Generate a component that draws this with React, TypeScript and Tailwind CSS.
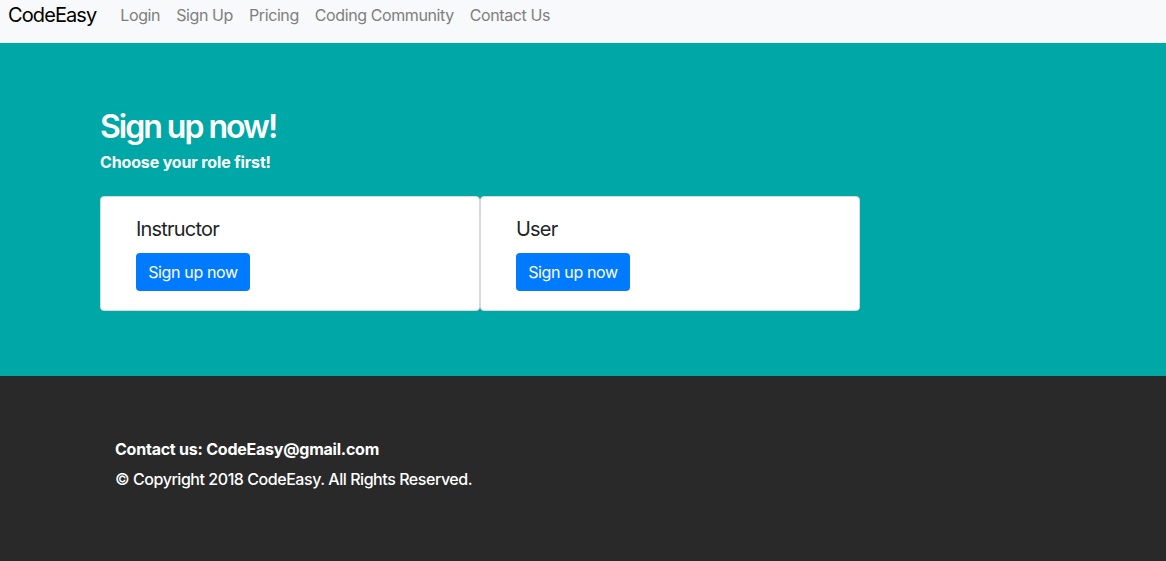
import React from "react";

const links = ["Login", "Sign Up", "Pricing", "Coding Community", "Contact Us"];
const roles = ["Instructor", "User"];

function RoleCard({ title }: { title: string }) {
  return (
    <div className="w-[380px] h-[115px] bg-white border border-[#d9d9d9] rounded-[4px] pl-[35px] pt-[20px]">
      <h5 className="text-[20px] leading-[24px] text-[#212529] font-normal tracking-[-0.8px]">{title}</h5>
      <button className="mt-[12px] h-[38px] w-[114px] rounded-[4px] bg-[#007bff] text-white text-[16px] leading-[24px] tracking-[-0.35px]">
        Sign up now
      </button>
    </div>
  );
}

export default function App() {
  return (
    <div className="min-h-screen flex flex-col font-['Inter','Liberation_Sans',sans-serif]">
      {/* navbar */}
      <nav className="h-[43px] bg-[#f8f9fa] flex items-start px-2">
        <a className="text-[20px] leading-[30px] text-black mr-4 tracking-[-0.9px]">CodeEasy</a>
        <div className="flex">
          {links.map((l) => (
            <a key={l} className="px-2 text-[16px] leading-[30px] text-[#7f7f7f] tracking-[-0.4px]">
              {l}
            </a>
          ))}
        </div>
      </nav>

      {/* hero */}
      <section className="bg-[#00a7a7] pl-[100px] pt-[65px] pb-[65px]">
        <h1 className="text-[32px] leading-[38px] font-semibold text-white tracking-[-2px]">Sign up now!</h1>
        <p className="mt-[4px] text-[16px] leading-[24px] font-bold text-white tracking-[-0.15px]">Choose your role first!</p>
        <div className="mt-[22px] flex">
          {roles.map((r) => (
            <RoleCard key={r} title={r} />
          ))}
        </div>
      </section>

      {/* footer */}
      <footer className="flex-1 bg-[#292929] pl-[115px] pt-[61px] pb-[70px] text-white">
        <p className="text-[16px] leading-[24px] font-bold tracking-[-0.23px]">Contact us: CodeEasy@gmail.com</p>
        <p className="mt-[6px] text-[16px] leading-[24px] font-medium tracking-[-0.45px]">© Copyright 2018 CodeEasy. All Rights Reserved.</p>
      </footer>
    </div>
  );
}
